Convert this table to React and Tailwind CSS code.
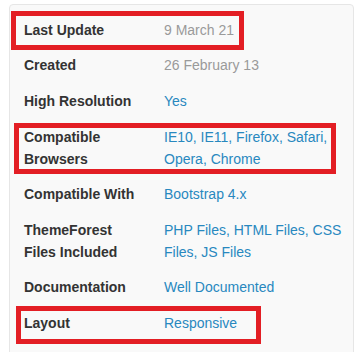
import React from "react";

const rows = [
  { label: "Last Update", value: "9 March 21", muted: true },
  { label: "Created", value: "26 February 13", muted: true },
  { label: "High Resolution", value: "Yes" },
  { label: "Compatible Browsers", value: "IE10, IE11, Firefox, Safari, Opera, Chrome" },
  { label: "Compatible With", value: "Bootstrap 4.x" },
  { label: "ThemeForest Files Included", value: "PHP Files, HTML Files, CSS Files, JS Files" },
  { label: "Documentation", value: "Well Documented" },
  { label: "Layout", value: "Responsive" },
];

export default function App() {
  return (
    <div className="w-[361px] h-[352px] bg-white overflow-hidden font-['Liberation_Sans',Arial,sans-serif] text-[14px]">
      <div className="relative ml-[9px] mt-[4px] w-[345px] h-[360px] bg-[#f9f9f9] border border-[#e6e6e6] rounded-[4px] pt-[7px] pl-[14px]">
        <div className="flex flex-col">
          {rows.map((row) => (
            <div key={row.label} className="flex py-[6.8px] leading-[22px]">
              <div className="w-[140px] pr-[24px] font-bold text-[#333333]">{row.label}</div>
              <div className={`w-[180px] ${row.muted ? "text-[#9a9a9a]" : "text-[#2888bf]"}`}>
                {row.value}
              </div>
            </div>
          ))}
        </div>

        {/* highlight frames over selected rows */}
        <div className="absolute left-[1px] top-[6px] w-[233px] h-[39px] border-[5px] border-[#e31e24] pointer-events-none" />
        <div className="absolute left-[4px] top-[118px] w-[322px] h-[51px] border-[5px] border-[#e31e24] pointer-events-none" />
        <div className="absolute left-[6px] top-[301px] w-[245px] h-[38px] border-[5px] border-[#e31e24] pointer-events-none" />
      </div>
    </div>
  );
}
